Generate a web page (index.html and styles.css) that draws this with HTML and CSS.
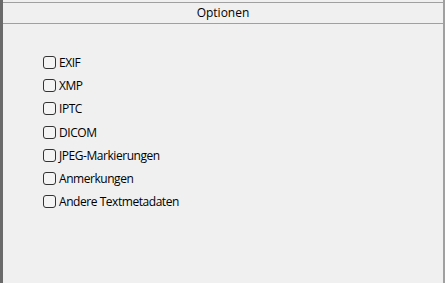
FILE: index.html
```html
<!DOCTYPE html>
<html lang="de">
<head>
  <meta charset="UTF-8">
  <title>Optionen</title>
  <link rel="stylesheet" href="styles.css">
</head>
<body>
  <div class="panel">
    <div class="header">Optionen</div>
    <ul class="options">
      <li><span class="box"></span>EXIF</li>
      <li><span class="box"></span>XMP</li>
      <li><span class="box"></span>IPTC</li>
      <li><span class="box"></span>DICOM</li>
      <li><span class="box"></span>JPEG-Markierungen</li>
      <li><span class="box"></span>Anmerkungen</li>
      <li><span class="box"></span>Andere Textmetadaten</li>
    </ul>
  </div>
</body>
</html>
```
FILE: styles.css
```css
html, body {
  margin: 0;
  height: 100%;
}

body {
  font-family: "Open Sans", "Noto Sans", sans-serif;
  font-size: 12px;
  color: #000;
  background-color: #f0f0f0;
}

.panel {
  box-sizing: border-box;
  height: 283px;
  border-left: 3px solid #6a6a6a;
  border-right: 2px solid #a0a0a0;
  padding-top: 2px;
}

.header {
  height: 20px;
  line-height: 20px;
  text-align: center;
  border-top: 1px solid #a0a0a0;
  border-bottom: 1px solid #a0a0a0;
}

.options {
  list-style: none;
  margin: 0;
  padding: 27px 0 0 40px;
}

.options li {
  display: flex;
  align-items: center;
  height: 23.2px;
  letter-spacing: -0.45px;
}

.box {
  box-sizing: border-box;
  width: 13px;
  height: 13px;
  border: 1px solid #333;
  border-radius: 3px;
  background-color: #f4f4f4;
  margin-right: 3px;
}
```
